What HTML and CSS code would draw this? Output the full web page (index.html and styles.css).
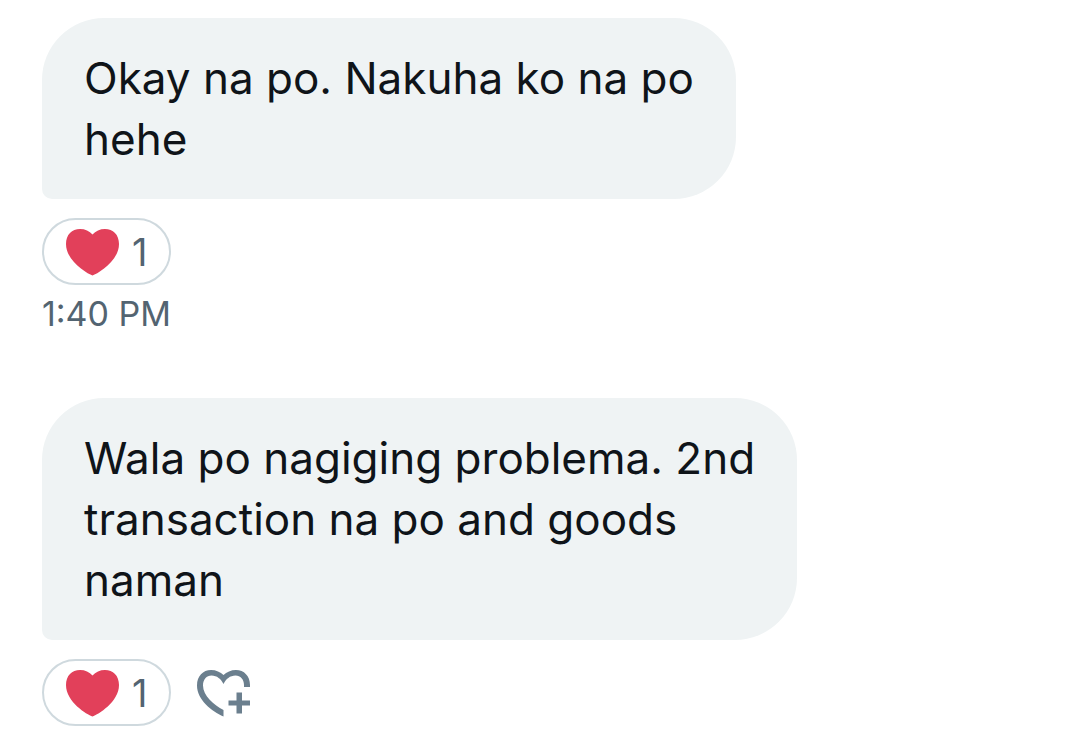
FILE: index.html
```html
<!DOCTYPE html>
<html lang="tl">

<head>
    <meta charset="UTF-8">
    <meta name="viewport" content="width=device-width, initial-scale=1.0">
    <title>Messages</title>
    <link rel="stylesheet" href="styles.css">
</head>

<body>
    <main class="chat">
        <div class="message">
            <p class="bubble">Okay na po. Nakuha ko na po<br>hehe</p>
            <div class="reactions">
                <button type="button" class="reaction" aria-label="Heart, 1">
                    <svg class="heart" viewBox="0 0 53 48" aria-hidden="true">
                        <path d="M26.500 47.500C21 45.500 0 33 0 16C0 6.500 6 1 14 1C19 1 23.500 3 26.500 6.500C29.500 3 34 1 39 1C47 1 53 6.500 53 16C53 33 32 45.500 26.500 47.500Z" />
                    </svg>
                    <span>1</span>
                </button>
            </div>
            <time class="time" datetime="13:40">1:40 PM</time>
        </div>

        <div class="message">
            <p class="bubble">Wala po nagiging problema. 2nd<br>transaction na po and goods<br>naman</p>
            <div class="reactions">
                <button type="button" class="reaction" aria-label="Heart, 1">
                    <svg class="heart" viewBox="0 0 53 48" aria-hidden="true">
                        <path d="M26.500 47.500C21 45.500 0 33 0 16C0 6.500 6 1 14 1C19 1 23.500 3 26.500 6.500C29.500 3 34 1 39 1C47 1 53 6.500 53 16C53 33 32 45.500 26.500 47.500Z" />
                    </svg>
                    <span>1</span>
                </button>
                <button type="button" class="add-reaction" aria-label="Add reaction">
                    <svg class="heart-plus" viewBox="0 0 53 48" aria-hidden="true">
                        <path d="M53 18V16C53 7 47 1 39 1C34 1 29.500 3 26.500 6C23.500 3 19 1 14 1C6 1 0 7 0 16.500C0 31 15 42.500 26.500 47.500V41C17 36 6 27 6 16.500C6 10.500 9.500 6.500 14.500 6.500C20 6.500 24 10 26.500 15C29 10 33 6.500 38.500 6.500C43.500 6.500 47 10.500 47 16V18Z" />
                        <path d="M39.500 23.500h5.500v8h8v5h-8v8h-5.500v-8h-8v-5h8z" />
                    </svg>
                </button>
            </div>
        </div>
    </main>
</body>

</html>
```

FILE: styles.css
```css
* {
    box-sizing: border-box;
}

body {
    margin: 0;
    background-color: #fff;
    color: #0f1419;
    font-family: Inter, "Liberation Sans", sans-serif;
}

.chat {
    display: flex;
    flex-direction: column;
    gap: 60px;
    padding: 18px 42px 11px;
}

.message {
    display: flex;
    flex-direction: column;
    align-items: flex-start;
}

.bubble {
    margin: 0;
    padding: 30px 42px 29px;
    border-radius: 62px 62px 62px 10px;
    background-color: #eff3f4;
    font-size: 44px;
    line-height: 61px;
}

.reactions {
    display: flex;
    align-items: center;
    gap: 26px;
    margin-top: 19px;
}

.reaction {
    display: flex;
    align-items: center;
    gap: 13px;
    height: 67px;
    padding: 0 22px;
    border: 2px solid #cfd9de;
    border-radius: 34px;
    background-color: #fff;
    color: #536471;
    font-family: inherit;
    font-size: 38px;
    cursor: pointer;
}

.heart,
.heart-plus {
    display: block;
    width: 53px;
    height: 48px;
}

.heart {
    fill: #e2405a;
}

.heart-plus {
    fill: #6b7f8e;
}

.add-reaction {
    padding: 0;
    border: 0;
    background: none;
    cursor: pointer;
}

.time {
    margin-top: 5px;
    color: #536471;
    font-size: 34px;
    line-height: 48px;
}
```
